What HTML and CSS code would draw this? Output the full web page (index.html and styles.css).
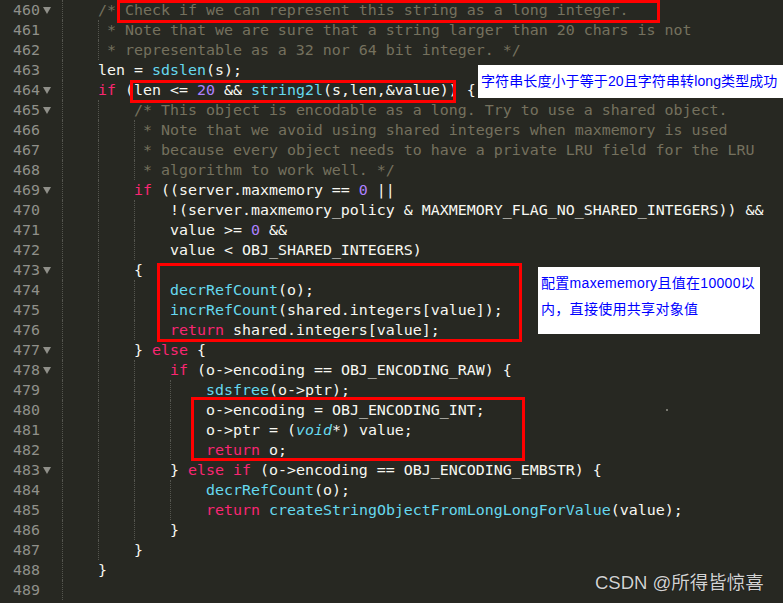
FILE: index.html
```html
<!DOCTYPE html>
<html lang="zh-CN">
<head>
    <meta charset="UTF-8">
    <title>object.c</title>
    <link rel="stylesheet" href="styles.css">
</head>
<body>
    <div class="editor">
        <div class="row"><span class="ln">460</span><span class="fold on"></span><span class="code"><span class="g"></span><span class="cm">/* Check if we can represent this string as a long integer.</span></span></div>
        <div class="row"><span class="ln">461</span><span class="fold"></span><span class="code"><span class="g"></span><span class="g1"></span><span class="cm">* Note that we are sure that a string larger than 20 chars is not</span></span></div>
        <div class="row"><span class="ln">462</span><span class="fold"></span><span class="code"><span class="g"></span><span class="g1"></span><span class="cm">* representable as a 32 nor 64 bit integer. */</span></span></div>
        <div class="row"><span class="ln">463</span><span class="fold"></span><span class="code"><span class="g"></span>len = <span class="fn">sdslen</span>(s);</span></div>
        <div class="row"><span class="ln">464</span><span class="fold on"></span><span class="code"><span class="g"></span><span class="kw">if</span> (len &lt;= <span class="nu">20</span> &amp;&amp; <span class="fn">string2l</span>(s,len,&amp;value)) {</span></div>
        <div class="row"><span class="ln">465</span><span class="fold on"></span><span class="code"><span class="g"></span><span class="g"></span><span class="cm">/* This object is encodable as a long. Try to use a shared object.</span></span></div>
        <div class="row"><span class="ln">466</span><span class="fold"></span><span class="code"><span class="g"></span><span class="g"></span><span class="g1"></span><span class="cm">* Note that we avoid using shared integers when maxmemory is used</span></span></div>
        <div class="row"><span class="ln">467</span><span class="fold"></span><span class="code"><span class="g"></span><span class="g"></span><span class="g1"></span><span class="cm">* because every object needs to have a private LRU field for the LRU</span></span></div>
        <div class="row"><span class="ln">468</span><span class="fold"></span><span class="code"><span class="g"></span><span class="g"></span><span class="g1"></span><span class="cm">* algorithm to work well. */</span></span></div>
        <div class="row"><span class="ln">469</span><span class="fold on"></span><span class="code"><span class="g"></span><span class="g"></span><span class="kw">if</span> ((server.maxmemory == <span class="nu">0</span> ||</span></div>
        <div class="row"><span class="ln">470</span><span class="fold"></span><span class="code"><span class="g"></span><span class="g"></span><span class="g"></span>!(server.maxmemory_policy &amp; MAXMEMORY_FLAG_NO_SHARED_INTEGERS)) &amp;&amp;</span></div>
        <div class="row"><span class="ln">471</span><span class="fold"></span><span class="code"><span class="g"></span><span class="g"></span><span class="g"></span>value &gt;= <span class="nu">0</span> &amp;&amp;</span></div>
        <div class="row"><span class="ln">472</span><span class="fold"></span><span class="code"><span class="g"></span><span class="g"></span><span class="g"></span>value &lt; OBJ_SHARED_INTEGERS)</span></div>
        <div class="row"><span class="ln">473</span><span class="fold on"></span><span class="code"><span class="g"></span><span class="g"></span>{</span></div>
        <div class="row"><span class="ln">474</span><span class="fold"></span><span class="code"><span class="g"></span><span class="g"></span><span class="g"></span><span class="fn">decrRefCount</span>(o);</span></div>
        <div class="row"><span class="ln">475</span><span class="fold"></span><span class="code"><span class="g"></span><span class="g"></span><span class="g"></span><span class="fn">incrRefCount</span>(shared.integers[value]);</span></div>
        <div class="row"><span class="ln">476</span><span class="fold"></span><span class="code"><span class="g"></span><span class="g"></span><span class="g"></span><span class="kw">return</span> shared.integers[value];</span></div>
        <div class="row"><span class="ln">477</span><span class="fold on"></span><span class="code"><span class="g"></span><span class="g"></span>} <span class="kw">else</span> {</span></div>
        <div class="row"><span class="ln">478</span><span class="fold on"></span><span class="code"><span class="g"></span><span class="g"></span><span class="g"></span><span class="kw">if</span> (o-&gt;encoding == OBJ_ENCODING_RAW) {</span></div>
        <div class="row"><span class="ln">479</span><span class="fold"></span><span class="code"><span class="g"></span><span class="g"></span><span class="g"></span><span class="g"></span><span class="fn">sdsfree</span>(o-&gt;ptr);</span></div>
        <div class="row"><span class="ln">480</span><span class="fold"></span><span class="code"><span class="g"></span><span class="g"></span><span class="g"></span><span class="g"></span>o-&gt;encoding = OBJ_ENCODING_INT;</span></div>
        <div class="row"><span class="ln">481</span><span class="fold"></span><span class="code"><span class="g"></span><span class="g"></span><span class="g"></span><span class="g"></span>o-&gt;ptr = (<span class="ty">void</span>*) value;</span></div>
        <div class="row"><span class="ln">482</span><span class="fold"></span><span class="code"><span class="g"></span><span class="g"></span><span class="g"></span><span class="g"></span><span class="kw">return</span> o;</span></div>
        <div class="row"><span class="ln">483</span><span class="fold on"></span><span class="code"><span class="g"></span><span class="g"></span><span class="g"></span>} <span class="kw">else if</span> (o-&gt;encoding == OBJ_ENCODING_EMBSTR) {</span></div>
        <div class="row"><span class="ln">484</span><span class="fold"></span><span class="code"><span class="g"></span><span class="g"></span><span class="g"></span><span class="g"></span><span class="fn">decrRefCount</span>(o);</span></div>
        <div class="row"><span class="ln">485</span><span class="fold"></span><span class="code"><span class="g"></span><span class="g"></span><span class="g"></span><span class="g"></span><span class="kw">return</span> <span class="fn">createStringObjectFromLongLongForValue</span>(value);</span></div>
        <div class="row"><span class="ln">486</span><span class="fold"></span><span class="code"><span class="g"></span><span class="g"></span><span class="g"></span>}</span></div>
        <div class="row"><span class="ln">487</span><span class="fold"></span><span class="code"><span class="g"></span><span class="g"></span>}</span></div>
        <div class="row"><span class="ln">488</span><span class="fold"></span><span class="code"><span class="g"></span>}</span></div>
        <div class="row"><span class="ln">489</span><span class="fold"></span><span class="code"><span class="g"></span></span></div>

        <!-- 標註框 -->
        <div class="mark m1"></div>
        <div class="mark m2"></div>
        <div class="mark m3"></div>
        <div class="mark m4"></div>

        <div class="note n1">字符串长度小于等于20且字符串转long类型成功</div>
        <div class="note n2">配置maxememory且值在10000以<br>内，直接使用共享对象值</div>

        <span class="speck"></span>
        <div class="watermark">CSDN @所得皆惊喜</div>
    </div>
</body>
</html>
```

FILE: styles.css
```css
:root {
    --bg: #272822;
    --gutter: #90908a;
    --text: #f8f8f2;
    --comment: #75715e;
    --keyword: #f92672;
    --func: #66d9ef;
    --number: #ae81ff;
    --guide: #55564f;
    --mark: #ff0000;
    --note-blue: #0000ff;
}

body {
    margin: 0;
    background: var(--bg);
    overflow: hidden;
}

.editor {
    position: relative;
    width: 783px;
    height: 603px;
    font-family: 'DejaVu Sans Mono', 'Liberation Mono', monospace;
    font-size: 14.95px;
    color: var(--text);
}

.row {
    display: flex;
    height: 20px;
    line-height: 20px;
}

.ln {
    width: 40px;
    text-align: right;
    color: var(--gutter);
}

.fold {
    width: 22px;
    display: flex;
    align-items: center;
}

.fold.on::before {
    content: '';
    margin-left: 3px;
    border-left: 4.5px solid transparent;
    border-right: 4.5px solid transparent;
    border-top: 7px solid var(--gutter);
}

.code {
    display: block;
    white-space: pre;
}

/* 縮排參考線 */
.g,
.g1 {
    display: inline-block;
    vertical-align: top;
    box-sizing: border-box;
    height: 20px;
    border-left: 1px dotted var(--guide);
}

.g { width: 36px; }
.g1 { width: 9px; }

.cm { color: var(--comment); }
.kw { color: var(--keyword); }
.fn { color: var(--func); }
.nu { color: var(--number); }
.ty { color: var(--func); font-style: italic; }

.mark {
    position: absolute;
    box-sizing: border-box;
    border: 3px solid var(--mark);
}

.m1 { left: 117px; top: 0; width: 543px; height: 23px; }
.m2 { left: 130px; top: 80px; width: 326px; height: 23px; }
.m3 { left: 157px; top: 263px; width: 365px; height: 79px; }
.m4 { left: 191px; top: 397px; width: 334px; height: 64px; }

.note {
    position: absolute;
    box-sizing: border-box;
    background: #ffffff;
    color: var(--note-blue);
    font-family: 'Liberation Sans', 'Noto Sans CJK SC', sans-serif;
    font-size: 14px;
    white-space: nowrap;
}

.n1 {
    left: 478px;
    top: 65px;
    width: 310px;
    height: 33px;
    line-height: 33px;
    padding-left: 3px;
    letter-spacing: 0.1px;
}

.n2 {
    left: 538px;
    top: 267px;
    width: 222px;
    height: 67px;
    line-height: 26px;
    padding: 3px 0 0 3px;
    letter-spacing: 0.3px;
}

.speck {
    position: absolute;
    left: 666px;
    top: 409px;
    width: 2px;
    height: 2px;
    background: #77776f;
}

.watermark {
    position: absolute;
    left: 595px;
    top: 570px;
    font-family: 'Liberation Sans', 'Noto Sans CJK SC', sans-serif;
    font-size: 18.5px;
    line-height: 26px;
    color: #d2d2d2;
    text-shadow: 0 0 1px #000000;
}
```
